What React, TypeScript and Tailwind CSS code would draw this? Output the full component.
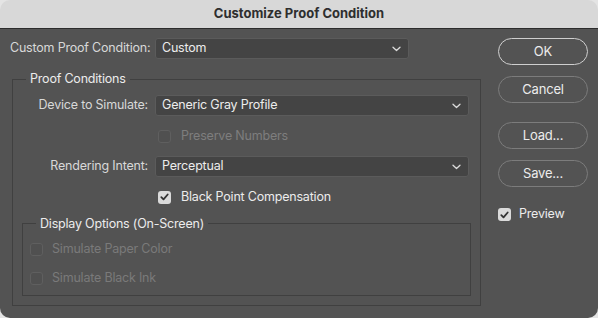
import React from "react";

// Photoshop-style "Customize Proof Condition" dialog (dark UI)

function Chevron() {
  return (
    <svg width="9" height="6" viewBox="0 0 9 6" fill="none">
      <path d="M1 1.2l3.5 3.3L8 1.2" stroke="#dcdcdc" strokeWidth="1.3" strokeLinecap="round" strokeLinejoin="round" />
    </svg>
  );
}

function Select({ value, className }: { value: string; className: string }) {
  return (
    <div
      className={`flex h-[21px] items-center justify-between rounded-[3px] border border-[#5b5b5b] bg-[#444444] pl-[6px] pr-[7px] text-[#ececec] ${className}`}
    >
      <span>{value}</span>
      <Chevron />
    </div>
  );
}

function Checkbox({ checked, disabled }: { checked?: boolean; disabled?: boolean }) {
  if (checked) {
    return (
      <div className="flex h-[13px] w-[13px] shrink-0 items-center justify-center rounded-[3px] bg-[#dadada]">
        <svg width="9" height="8" viewBox="0 0 9 8" fill="none">
          <path d="M1.3 4.2l2.2 2.2L7.7 1.5" stroke="#333333" strokeWidth="1.8" strokeLinecap="round" strokeLinejoin="round" />
        </svg>
      </div>
    );
  }
  return (
    <div
      className={`h-[13px] w-[13px] shrink-0 rounded-[3px] border ${
        disabled ? "border-[#5f5f5f] bg-[#505050]" : "border-[#8a8a8a] bg-[#4a4a4a]"
      }`}
    />
  );
}

function DialogButton({ label, primary }: { label: string; primary?: boolean }) {
  return (
    <button
      className={`h-[27px] w-[90px] rounded-full pt-[1px] text-[13px] tracking-[-0.2px] text-[#ececec] ${
        primary ? "border-[1.5px] border-[#cfcfcf]" : "border border-[#7c7c7c]"
      }`}
    >
      {label}
    </button>
  );
}

export default function App() {
  return (
    <div className="h-[318px] w-[598px] bg-[#e4e4e4]" style={{ fontFamily: "Inter, 'Liberation Sans', sans-serif" }}>
      <div className="flex h-full w-full flex-col overflow-hidden rounded-[10px] text-[12.5px] tracking-[-0.2px] whitespace-nowrap">
        {/* title bar */}
        <div className="flex h-[29px] shrink-0 items-center justify-center border-b border-[#2c2c2c] bg-[#d8d8d8] pb-[1px] text-[13px] font-bold tracking-normal text-[#2e2e2e]">
          Customize Proof Condition
        </div>

        <div className="flex flex-1 bg-[#535353]">
          {/* left side */}
          <div className="w-[482px] pl-[10px] pt-[9px]">
            <div className="flex h-[21px] items-center">
              <span className="w-[145px] text-[#d8d8d8]">Custom Proof Condition:</span>
              <Select value="Custom" className="w-[254px]" />
            </div>

            <fieldset className="mt-[12px] ml-[2px] w-[469px] border border-[#404040] pb-[9px]">
              <legend className="ml-[13px] px-[4px] leading-[16px] text-[#ececec]">Proof Conditions</legend>

              <div className="mt-[8px] flex flex-col gap-[9.5px] pr-[11px]">
                <div className="flex h-[21px] items-center gap-[7px]">
                  <span className="w-[135px] text-right text-[#d8d8d8]">Device to Simulate:</span>
                  <Select value="Generic Gray Profile" className="flex-1" />
                </div>
                <div className="flex h-[21px] items-center pl-[145px]">
                  <Checkbox disabled />
                  <span className="ml-[10px] text-[#7e7e7e]">Preserve Numbers</span>
                </div>
                <div className="flex h-[21px] items-center gap-[7px]">
                  <span className="w-[135px] text-right text-[#d8d8d8]">Rendering Intent:</span>
                  <Select value="Perceptual" className="flex-1" />
                </div>
                <div className="flex h-[21px] items-center pl-[145px]">
                  <Checkbox checked />
                  <span className="ml-[10px] text-[#ececec]">Black Point Compensation</span>
                </div>
              </div>

              <fieldset className="mx-[9px] mt-[8px] border border-[#404040] pb-[6px] pl-[7px]">
                <legend className="ml-[6px] px-[4px] leading-[16px] text-[#ececec]">Display Options (On-Screen)</legend>
                <div className="mt-[7px] flex flex-col gap-[8px]">
                  <div className="flex h-[21px] items-center">
                    <Checkbox disabled />
                    <span className="ml-[9px] text-[#7a7a7a]">Simulate Paper Color</span>
                  </div>
                  <div className="flex h-[21px] items-center">
                    <Checkbox disabled />
                    <span className="ml-[9px] text-[#7a7a7a]">Simulate Black Ink</span>
                  </div>
                </div>
              </fieldset>
            </fieldset>
          </div>

          {/* right side buttons */}
          <div className="ml-[16px] flex flex-col items-start pt-[9px]">
            <DialogButton label="OK" primary />
            <div className="mt-[11px]">
              <DialogButton label="Cancel" />
            </div>
            <div className="mt-[19px]">
              <DialogButton label="Load..." />
            </div>
            <div className="mt-[11px]">
              <DialogButton label="Save..." />
            </div>
            <div className="mt-[17px] flex h-[21px] items-center">
              <Checkbox checked />
              <span className="ml-[8px] text-[#ececec]">Preview</span>
            </div>
          </div>
        </div>
      </div>
    </div>
  );
}
